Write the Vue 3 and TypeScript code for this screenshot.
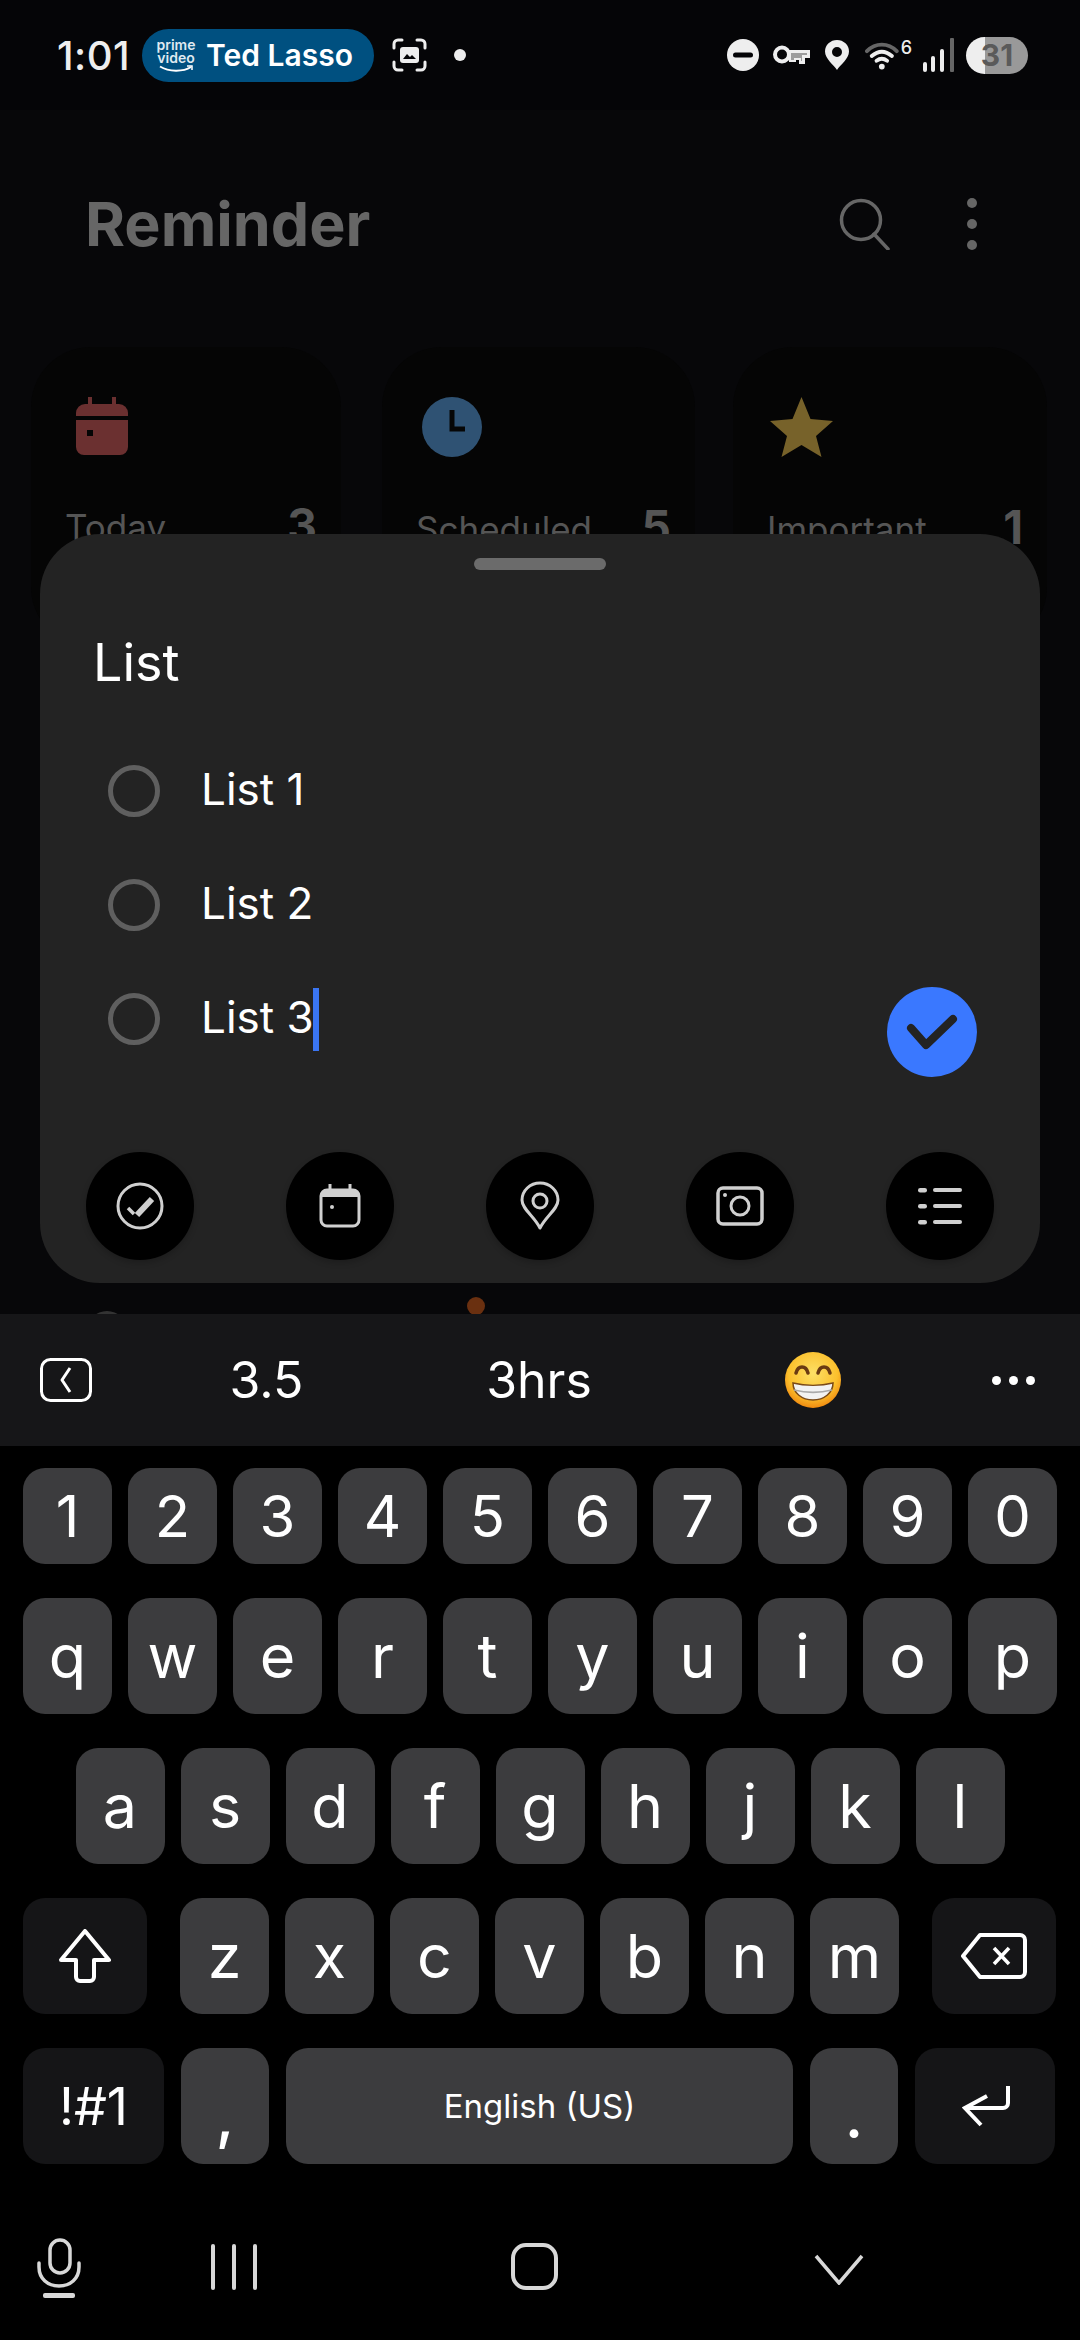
<script setup lang="ts">
const listRows = ["List 1", "List 2", "List 3"];
const numberKeys = "1234567890".split("");
const topKeys = "qwertyuiop".split("");
const midKeys = "asdfghjkl".split("");
const lowKeys = "zxcvbnm".split("");
const cards = [
  { name: "Today", count: 3, icon: "cal" },
  { name: "Scheduled", count: 5, icon: "clock" },
  { name: "Important", count: 1, icon: "star" },
];
</script>

<template>
  <div class="phone">
    <header class="status">
      <span class="time">1:01</span>
      <div class="pill">
        <div class="prime">
          <span>prime</span>
          <span>video</span>
          <svg width="34" height="8" viewBox="0 0 34 8">
            <path d="M1 1.5C10 7 24 7 32 2" fill="none" stroke="#fff" stroke-width="2" />
            <path d="M28 1h5v4" fill="none" stroke="#fff" stroke-width="1.5" />
          </svg>
        </div>
        <span class="show">Ted Lasso</span>
      </div>
      <svg class="shot" width="35" height="34" viewBox="0 0 35 34">
        <path d="M2 10V6a4 4 0 0 1 4-4h4M25 2h4a4 4 0 0 1 4 4v4M33 24v4a4 4 0 0 1-4 4h-4M10 32H6a4 4 0 0 1-4-4v-4" fill="none" stroke="#eee" stroke-width="3" stroke-linecap="round" />
        <rect x="8" y="9" width="19" height="16" rx="3" fill="#eee" />
        <path d="M11 21l4-5 3 3 2-2 4 4z" fill="#050507" />
      </svg>
      <i class="note-dot"></i>
      <div class="status-right">
        <svg width="32" height="32" viewBox="0 0 32 32">
          <circle cx="16" cy="16" r="16" fill="#eee" />
          <rect x="6" y="13.5" width="20" height="5" rx="2.5" fill="#050507" />
        </svg>
        <svg class="s-key" width="37" height="20" viewBox="0 0 37 20">
          <circle cx="9" cy="9.5" r="7" fill="none" stroke="#eee" stroke-width="4" />
          <path d="M16 5h21v8h-5v6h-6v-4h-3v2h-7z" fill="#eee" />
          <path d="M18 8h16v2h-5v6h-1v-3h-7v2h-3z" fill="#050507" opacity="0.35" />
        </svg>
        <svg class="s-pin" width="24" height="30" viewBox="0 0 24 30">
          <path fill-rule="evenodd" d="M12 30C9 25 0 19 0 11.5a12 11.5 0 0 1 24 0C24 19 15 25 12 30ZM12 7a5 5 0 1 0 0 10 5 5 0 0 0 0-10Z" fill="#eee" />
        </svg>
        <div class="s-wifi">
          <svg width="35" height="30" viewBox="0 0 35 30">
            <path d="M2 11C11 2 24 2 33 11" fill="none" stroke="#666" stroke-width="4" stroke-linecap="round" />
            <path d="M7 16c7-6 14-6 21 0" fill="none" stroke="#eee" stroke-width="4" stroke-linecap="round" />
            <path d="M12 21c4-3 7-3 11 0" fill="none" stroke="#eee" stroke-width="4" stroke-linecap="round" />
            <circle cx="17.5" cy="27" r="3" fill="#eee" />
          </svg>
          <span>6</span>
        </div>
        <svg class="s-signal" width="31" height="34" viewBox="0 0 31 34">
          <rect x="0" y="24" width="4" height="10" rx="2" fill="#eee" />
          <rect x="8" y="18" width="4" height="16" rx="2" fill="#eee" />
          <rect x="17" y="11" width="4" height="23" rx="2" fill="#eee" />
          <rect x="27" y="0" width="4" height="34" rx="1" fill="#666" />
        </svg>
        <div class="battery"><span>31</span></div>
      </div>
    </header>

    <main class="stage">
      <div class="page">
        <div class="page-head">
          <h1>Reminder</h1>
          <svg width="52" height="52" viewBox="0 0 52 52">
            <circle cx="22" cy="22" r="19.5" fill="none" stroke="#666" stroke-width="3.5" />
            <path d="M35 36l14 15" fill="none" stroke="#666" stroke-width="3.5" stroke-linecap="round" />
          </svg>
          <div class="more"><i></i><i></i><i></i></div>
        </div>
        <div class="cards">
          <div v-for="c in cards" :key="c.name" class="card">
            <svg v-if="c.icon === 'cal'" class="card-ic" width="52" height="58" viewBox="0 0 52 58">
              <path d="M14 0v8M38 0v8" stroke="#6b3030" stroke-width="4" stroke-linecap="round" />
              <path d="M0 19v-3a9 9 0 0 1 9-9h34a9 9 0 0 1 9 9v3z" fill="#6b3030" />
              <path fill-rule="evenodd" d="M0 23h52v27a8 8 0 0 1-8 8H8a8 8 0 0 1-8-8zM11 33v6h6v-6z" fill="#6b3030" />
            </svg>
            <svg v-else-if="c.icon === 'clock'" class="card-ic" width="60" height="60" viewBox="0 0 60 60">
              <circle cx="30" cy="30" r="30" fill="#2f5273" />
              <path d="M30 13v19h13" fill="none" stroke="#060606" stroke-width="5" />
            </svg>
            <svg v-else class="card-ic" width="63" height="60" viewBox="0 0 63 60">
              <path d="M31.5 0l9 22 22.5 2-17 15 5.5 21-20-12-20 12 5.5-21L0 24l22.5-2z" fill="#77622a" />
            </svg>
            <div class="card-row">
              <span class="card-name">{{ c.name }}</span>
              <span class="card-count">{{ c.count }}</span>
            </div>
          </div>
        </div>
        <div class="lower"><i class="gray"></i><i class="orange"></i></div>
      </div>

      <section class="sheet">
        <div class="handle"></div>
        <div class="sheet-title">List</div>
        <div class="rows">
          <div v-for="(row, i) in listRows" :key="row" class="row">
            <i class="radio"></i>
            <span>{{ row }}</span>
            <i v-if="i === 2" class="caret"></i>
          </div>
        </div>
        <button class="done">
          <svg width="52" height="36" viewBox="0 0 52 36">
            <path d="M5 14l15 17L47 5" fill="none" stroke="#232323" stroke-width="8" stroke-linecap="round" stroke-linejoin="round" />
          </svg>
        </button>
        <div class="tools">
          <div class="tool">
            <svg width="48" height="48" viewBox="0 0 48 48">
              <circle cx="24" cy="24" r="22" fill="none" stroke="#d0d0d0" stroke-width="3" />
              <path d="M21 33l15-16" stroke="#d0d0d0" stroke-width="6" />
              <path d="M12 26l6 6" stroke="#d0d0d0" stroke-width="3.5" />
            </svg>
          </div>
          <div class="tool">
            <svg width="42" height="44" viewBox="0 0 42 44">
              <path d="M11 0v6M31 0v6" stroke="#d0d0d0" stroke-width="3" />
              <rect x="2" y="6" width="38" height="36" rx="6" fill="none" stroke="#d0d0d0" stroke-width="3" />
              <path d="M2 12a6 6 0 0 1 6-6h26a6 6 0 0 1 6 6v1H2z" fill="#d0d0d0" />
              <circle cx="13" cy="23" r="2" fill="#d0d0d0" />
            </svg>
          </div>
          <div class="tool">
            <svg width="40" height="50" viewBox="0 0 40 50">
              <path d="M20 47C14 35 2 28 2 19a18 17 0 0 1 36 0C38 28 26 35 20 47Z" fill="none" stroke="#d0d0d0" stroke-width="3" stroke-linejoin="round" />
              <circle cx="20" cy="20" r="7" fill="none" stroke="#d0d0d0" stroke-width="3" />
            </svg>
          </div>
          <div class="tool">
            <svg width="48" height="40" viewBox="0 0 48 40">
              <rect x="2" y="2" width="44" height="36" rx="5" fill="none" stroke="#d0d0d0" stroke-width="3.5" />
              <circle cx="24" cy="20" r="9" fill="none" stroke="#d0d0d0" stroke-width="3" />
              <circle cx="9" cy="9" r="2" fill="#d0d0d0" />
            </svg>
          </div>
          <div class="tool">
            <svg width="44" height="40" viewBox="0 0 44 40">
              <g fill="#d0d0d0">
                <rect x="0" y="2" width="9" height="4.5" rx="2.2" />
                <rect x="0" y="18" width="9" height="4.5" rx="2.2" />
                <rect x="0" y="34" width="9" height="4.5" rx="2.2" />
                <rect x="15" y="2" width="29" height="4" rx="2" />
                <rect x="15" y="18" width="29" height="4" rx="2" />
                <rect x="15" y="34" width="29" height="4" rx="2" />
              </g>
            </svg>
          </div>
        </div>
      </section>
    </main>

    <div class="suggest">
      <svg class="sug-back" width="52" height="44" viewBox="0 0 52 44">
        <rect x="1.5" y="1.5" width="49" height="41" rx="9" fill="none" stroke="#fff" stroke-width="3" />
        <path d="M30 10l-8 12 8 12" fill="none" stroke="#fff" stroke-width="3" stroke-linejoin="round" />
      </svg>
      <span class="sug-word first">3.5</span>
      <span class="sug-word">3hrs</span>
      <svg class="emoji" width="58" height="56" viewBox="0 0 58 56">
        <defs>
          <radialGradient id="face" cx="50%" cy="38%" r="62%">
            <stop offset="0%" stop-color="#fde066" />
            <stop offset="70%" stop-color="#fbc02d" />
            <stop offset="100%" stop-color="#f08a10" />
          </radialGradient>
        </defs>
        <ellipse cx="29" cy="28" rx="28" ry="28" fill="url(#face)" />
        <path d="M12 21c2-8 10-8 12 0M34 21c2-8 10-8 12 0" fill="none" stroke="#6a3a12" stroke-width="3.5" stroke-linecap="round" />
        <path d="M9 31c12 3 28 3 40 0 0 10-9 17-20 17S9 41 9 31Z" fill="#f2f2f2" stroke="#7a4a18" stroke-width="1.5" />
        <path d="M10 38c12 3 26 3 38 0" fill="none" stroke="#aaa" stroke-width="1.5" />
      </svg>
      <div class="sug-more"><i></i><i></i><i></i></div>
    </div>

    <div class="keyboard">
      <div class="key-row num">
        <button v-for="k in numberKeys" :key="k" class="key digit">{{ k }}</button>
      </div>
      <div class="key-row tall">
        <button v-for="k in topKeys" :key="k" class="key">{{ k }}</button>
      </div>
      <div class="key-row tall center">
        <button v-for="k in midKeys" :key="k" class="key">{{ k }}</button>
      </div>
      <div class="key-row tall shift-row">
        <button class="key fn wide">
          <svg width="52" height="54" viewBox="0 0 52 54">
            <path d="M26 2l24 29H35v17a4 4 0 0 1-4 4H21a4 4 0 0 1-4-4V31H2z" fill="none" stroke="#fff" stroke-width="4" stroke-linejoin="round" />
          </svg>
        </button>
        <div class="low-keys">
          <button v-for="k in lowKeys" :key="k" class="key">{{ k }}</button>
        </div>
        <button class="key fn wide">
          <svg width="66" height="46" viewBox="0 0 66 46">
            <path d="M19 2h40a5 5 0 0 1 5 5v32a5 5 0 0 1-5 5H19L2 23z" fill="none" stroke="#fff" stroke-width="4" stroke-linejoin="round" />
            <path d="M33 15l15 16M48 15L33 31" stroke="#fff" stroke-width="3.5" />
          </svg>
        </button>
      </div>
      <div class="key-row tall last">
        <button class="key fn sym">!#1</button>
        <button class="key punct">,</button>
        <button class="key space">English (US)</button>
        <button class="key punct">.</button>
        <button class="key fn enter">
          <svg width="50" height="42" viewBox="0 0 50 42">
            <path d="M46 1v17a5 5 0 0 1-5 5H4" fill="none" stroke="#fff" stroke-width="4" />
            <path d="M25 11L3 23l16 17" fill="none" stroke="#fff" stroke-width="4" />
          </svg>
        </button>
      </div>
    </div>

    <nav class="nav">
      <svg class="mic" width="44" height="60" viewBox="0 0 44 60">
        <rect x="13" y="2" width="20" height="33" rx="10" fill="none" stroke="#d8d8d8" stroke-width="3.5" />
        <path d="M2 25v4c0 12 9 19 20 19s20-7 20-19v-4" fill="none" stroke="#d8d8d8" stroke-width="3.5" stroke-linecap="round" />
        <rect x="6" y="55" width="32" height="5" rx="2" fill="#d8d8d8" />
      </svg>
      <div class="bars"><i></i><i></i><i></i></div>
      <i class="home"></i>
      <svg class="hide" width="50" height="32" viewBox="0 0 50 32">
        <path d="M2 3l23 27L48 3" fill="none" stroke="#d8d8d8" stroke-width="3.5" />
      </svg>
    </nav>
  </div>
</template>

<style scoped>
.phone {
  width: 1080px;
  height: 2340px;
  background: #000;
  display: flex;
  flex-direction: column;
  font-family: Inter, "Noto Sans", sans-serif;
  color: #fff;
  overflow: hidden;
}

.status {
  height: 110px;
  flex-shrink: 0;
  background: #050507;
  display: flex;
  align-items: center;
  padding-left: 57px;
  color: #eee;
}
.time {
  font-size: 40px;
  font-weight: 500;
  letter-spacing: 0.5px;
  width: 85px;
}
.pill {
  width: 232px;
  height: 53px;
  border-radius: 27px;
  background: #005080;
  display: flex;
  align-items: center;
  padding-left: 17px;
  box-sizing: border-box;
}
.prime {
  width: 34px;
  display: flex;
  flex-direction: column;
  align-items: center;
  font-size: 14px;
  line-height: 13px;
  font-weight: 600;
  color: #dfe9f0;
}
.prime svg {
  margin-top: 1px;
}
.show {
  margin-left: 13px;
  font-size: 30px;
  font-weight: 600;
  color: #fff;
  white-space: nowrap;
}
.shot {
  margin-left: 18px;
}
.note-dot {
  width: 12px;
  height: 12px;
  border-radius: 50%;
  background: #eee;
  margin-left: 27px;
}
.status-right {
  margin: 0 52px 0 auto;
  display: flex;
  align-items: center;
}
.s-key {
  margin-left: 14px;
}
.s-pin {
  margin-left: 15px;
}
.s-wifi {
  margin-left: 16px;
  width: 47px;
  display: flex;
  align-items: flex-start;
  height: 30px;
}
.s-wifi span {
  font-size: 18px;
  line-height: 15px;
  margin-left: 2px;
  font-weight: 500;
}
.s-signal {
  margin-left: 11px;
}
.battery {
  margin-left: 12px;
  width: 62px;
  height: 37px;
  border-radius: 19px;
  background: linear-gradient(90deg, #eee 0 19px, #999 19px);
  display: flex;
  align-items: center;
  justify-content: center;
  font-size: 30px;
  font-weight: 700;
  color: #5a5a5a;
}

.stage {
  position: relative;
  height: 1204px;
  flex-shrink: 0;
  background: #070709;
  overflow: hidden;
}
.page {
  display: flow-root;
}
.page-head {
  height: 108px;
  margin-top: 60px;
  padding: 0 103px 0 85px;
  display: flex;
  align-items: center;
}
.page-head h1 {
  margin: 0 auto 0 0;
  font-size: 61px;
  font-weight: 700;
  color: #666;
}
.more {
  margin-left: 76px;
  display: flex;
  flex-direction: column;
  gap: 11px;
}
.more i {
  width: 10px;
  height: 10px;
  border-radius: 50%;
  background: #666;
}
.cards {
  margin-top: 69px;
  padding-left: 31px;
  display: flex;
}
.card {
  height: 300px;
  padding: 50px 24px 0 34px;
  box-sizing: border-box;
  border-radius: 60px;
  background: #050505;
}
.card:nth-child(1) {
  width: 310px;
}
.card:nth-child(2) {
  width: 313px;
  margin-left: 41px;
}
.card:nth-child(3) {
  width: 314px;
  margin-left: 38px;
}
.card-ic {
  display: block;
  margin-bottom: 42px;
}
.card:nth-child(1) .card-ic {
  margin-left: 11px;
}
.card:nth-child(2) .card-ic {
  margin-left: 6px;
}
.card:nth-child(3) .card-ic {
  margin-left: 3px;
}
.card-row {
  display: flex;
  justify-content: space-between;
  align-items: flex-start;
  color: #555;
}
.card-name {
  font-size: 35px;
  margin-top: 9px;
}
.card-count {
  font-size: 46px;
  font-weight: 700;
  line-height: 56px;
}
.lower {
  margin-top: 650px;
  display: flex;
  align-items: flex-start;
}
.gray {
  width: 40px;
  height: 40px;
  border-radius: 50%;
  background: #333;
  margin: 14px 0 0 87px;
}
.orange {
  width: 18px;
  height: 18px;
  border-radius: 50%;
  background: #6a3010;
  margin: 0 0 0 340px;
}

.sheet {
  position: absolute;
  left: 40px;
  top: 424px;
  width: 1000px;
  height: 749px;
  border-radius: 60px;
  background: #232323;
  display: flex;
  flex-direction: column;
}
.handle {
  width: 132px;
  height: 12px;
  border-radius: 6px;
  background: #6b6b6b;
  margin: 24px auto 0;
}
.sheet-title {
  margin: 63px 0 0 53px;
  font-size: 52px;
  line-height: 60px;
}
.rows {
  margin-top: 41px;
  padding-left: 68px;
}
.row {
  height: 114px;
  display: flex;
  align-items: center;
  font-size: 44px;
}
.row span {
  margin-left: 41px;
  position: relative;
  top: -2px;
}
.radio {
  width: 52px;
  height: 52px;
  box-sizing: border-box;
  border-radius: 50%;
  border: 5px solid #5f5f5f;
}
.caret {
  width: 6px;
  height: 63px;
  margin-left: -1px;
  background: #3a75f2;
}
.done {
  position: absolute;
  left: 847px;
  top: 453px;
  width: 90px;
  height: 90px;
  border: 0;
  padding: 0;
  border-radius: 50%;
  background: #3a78ff;
  display: flex;
  align-items: center;
  justify-content: center;
}
.tools {
  margin-top: auto;
  margin-bottom: 23px;
  padding: 0 46px;
  display: flex;
  justify-content: space-between;
}
.tool {
  width: 108px;
  height: 108px;
  border-radius: 50%;
  background: #000;
  display: flex;
  align-items: center;
  justify-content: center;
  box-shadow: 0 3px 6px rgba(0, 0, 0, 0.2);
}

.suggest {
  height: 132px;
  flex-shrink: 0;
  background: #161618;
  display: grid;
  grid-template-columns: 52px 346px 202px 346px 44px;
  align-items: center;
  justify-items: center;
  padding-left: 40px;
  box-sizing: border-box;
}
.sug-back {
  justify-self: start;
}
.sug-word {
  font-size: 50px;
}
.sug-word.first {
  margin-left: 3px;
}
.sug-more {
  display: flex;
  gap: 8px;
  margin-left: 11px;
}
.sug-more i {
  width: 9px;
  height: 9px;
  border-radius: 50%;
  background: #fff;
}
.keyboard {
  padding: 22px 23px 0;
  display: flex;
  flex-direction: column;
  gap: 34px;
}
.key-row {
  display: flex;
  gap: 16px;
  height: 116px;
}
.key-row.num {
  height: 96px;
}
.key-row.center {
  justify-content: center;
}
.key-row.shift-row {
  gap: 33px;
}
.key-row.last {
  gap: 17px;
}
.low-keys {
  display: flex;
  gap: 16px;
}
.key {
  width: 89px;
  height: 100%;
  border: 0;
  padding: 0;
  border-radius: 22px;
  background: #3c3c3e;
  color: #fff;
  font-family: inherit;
  font-size: 61px;
  font-weight: 400;
  display: flex;
  align-items: center;
  justify-content: center;
}
.key.digit {
  font-size: 58px;
}
.key.fn {
  background: #151517;
}
.key.wide {
  width: 124px;
}
.key.sym {
  width: 141px;
  font-size: 52px;
}
.key.enter {
  width: 140px;
}
.key.enter svg {
  margin-left: 3px;
}
.key.punct {
  width: 88px;
  padding-top: 20px;
  font-weight: 500;
}
.key.space {
  width: 507px;
  font-size: 33px;
}
.nav {
  padding: 74px 0 0 37px;
  display: flex;
  align-items: flex-start;
}
.bars {
  margin: 6px 0 0 130px;
  display: flex;
  gap: 17px;
}
.bars i {
  width: 4px;
  height: 46px;
  border-radius: 2px;
  background: #d8d8d8;
}
.home {
  width: 47px;
  height: 47px;
  box-sizing: border-box;
  border: 4px solid #d8d8d8;
  border-radius: 15px;
  margin: 5px 0 0 254px;
}
.hide {
  margin: 15px 0 0 256px;
}
</style>
